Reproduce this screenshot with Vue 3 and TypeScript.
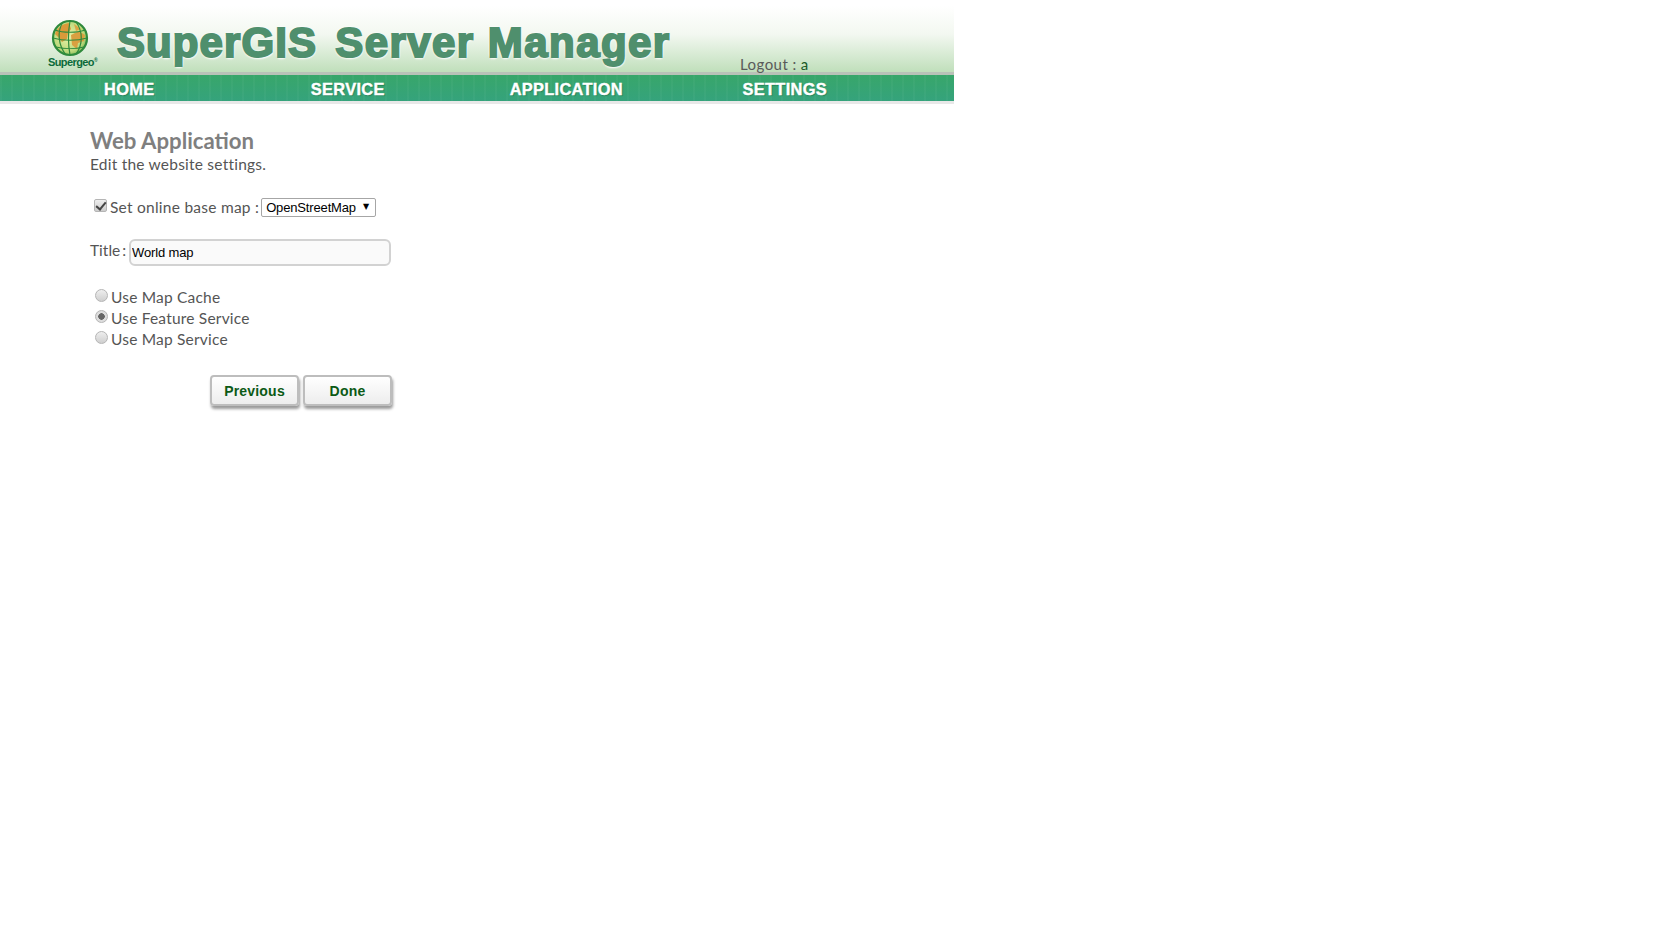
<script setup lang="ts">
import { ref } from 'vue'

const navItems: string[] = ['HOME', 'SERVICE', 'APPLICATION', 'SETTINGS']
const sources: string[] = ['Use Map Cache', 'Use Feature Service', 'Use Map Service']
const source = ref<string>('Use Feature Service')
const useBase = ref<boolean>(true)
const title = ref<string>('World map')
</script>

<template>
  <div class="page">
    <header class="header">
      <div class="banner">
        <div class="logo">
          <svg class="globe" width="38" height="38" viewBox="0 0 38 38">
            <defs>
              <radialGradient id="g" cx="0.45" cy="0.45" r="0.6">
                <stop offset="0" stop-color="#e9f2a8" />
                <stop offset="0.75" stop-color="#bcd97c" />
                <stop offset="1" stop-color="#7ab550" />
              </radialGradient>
            </defs>
            <circle cx="19" cy="19" r="17" fill="url(#g)" />
            <path d="M4 15c2-6 7-10 14-11l2 6-3 4-1 6-5 3-3-4z" fill="#d99a3a" />
            <path d="M20 16l8-4 6 4-1 6-6 2-1 6-5-4z" fill="#d9a040" />
            <path d="M23 5l7 5-5 2z" fill="#dba545" />
            <g fill="none" stroke="#2f8a3c" stroke-width="1.2">
              <circle cx="19" cy="19" r="17" stroke-width="2.2" />
              <path d="M12 3c-6 9-5 23 3 33M25 3c7 9 7 23 0 32" />
              <path d="M19 2c-2 11-2 23 0 34" />
              <path d="M4 11c8 3 22 3 30 0M2 19c10 3 24 3 34 0M5 28c8 2 20 2 28 0" />
            </g>
          </svg>
          <span class="logo-text">Supergeo<sup>®</sup></span>
        </div>
        <h1 class="product"><span class="word-a">SuperGIS</span><span class="word-b">Server Manager</span></h1>
        <div class="logout">Logout :<span class="user">a</span></div>
      </div>
      <nav class="nav">
        <a v-for="item in navItems" :key="item" class="nav-item">{{ item }}</a>
      </nav>
    </header>

    <main class="content">
      <h2 class="heading">Web Application</h2>
      <p class="sub">Edit the website settings.</p>

      <div class="base-row">
        <input v-model="useBase" class="check" type="checkbox" />
        <span class="label">Set online base map :</span>
        <select class="select">
          <option>OpenStreetMap</option>
        </select>
      </div>

      <div class="title-row">
        <span class="label">Title :</span>
        <input v-model="title" class="text" type="text" />
      </div>

      <div class="radios">
        <label v-for="s in sources" :key="s" class="radio-row">
          <input v-model="source" class="radio" type="radio" name="src" :value="s" />
          <span class="label">{{ s }}</span>
        </label>
      </div>

      <div class="actions">
        <button class="btn" type="button">Previous</button>
        <button class="btn" type="button">Done</button>
      </div>
    </main>
  </div>
</template>

<style>
html, body { background: #fff; margin: 0; }
</style>

<style scoped>
.page { min-height: 949px; background: #fff; font-family: Lato, "Open Sans", sans-serif; color: #555; }
.header { width: 954px; }
.banner {
  height: 72px;
  display: flex;
  background: linear-gradient(#fff 0, #fff 6px, #f3f8f1 34px, #c0dfbb 72px);
  border-bottom: 3px solid #b9c2b8;
}
.logo { width: 117px; padding: 19px 0 0 48px; box-sizing: border-box; display: flex; flex-direction: column; flex-shrink: 0; }
.globe { margin-left: 3px; display: block; }
.logo-text { font: bold 11px/11px "Liberation Sans", sans-serif; color: #0b6b3a; letter-spacing: -0.6px; white-space: nowrap; }
.logo-text sup { font-size: 5px; line-height: 0; vertical-align: 4px; }
.product {
  margin: 22px 0 0;
  width: 624px;
  flex-shrink: 0;
  display: flex;
  gap: 18px;
  font: bold 42px/42px "Liberation Sans", sans-serif;
  color: #4f8f6d;
  white-space: nowrap;
  -webkit-text-stroke: 2px #4f8f6d;
  text-shadow: 0 0 3px #fff, 0 0 3px #fff, 1px 1px 2px #fff, -1px -1px 2px #fff, 0 2px 2px #f2f6f0;
}
.word-a { letter-spacing: 1.1px; }
.word-b { letter-spacing: 1.45px; }
.logout { margin-top: 54px; margin-left: -1px; font-size: 15px; line-height: 20px; color: #5a5a5a; letter-spacing: 0.45px; white-space: nowrap; }
.user { color: #1c5a2a; margin-left: 4px; }
.nav {
  height: 26px;
  display: grid;
  grid-template-columns: repeat(4, 218.5px);
  padding-left: 20px;
  background:
    repeating-linear-gradient(90deg, rgba(255,255,255,.03) 0 2px, rgba(255,255,255,0) 2px 11px),
    linear-gradient(#38a66a, #35a37c);
  border-bottom: 3px solid #e8e8e8;
}
.nav-item {
  text-align: center;
  font: bold 16.4px/26px "Liberation Sans", sans-serif;
  letter-spacing: 0.3px;
  padding-top: 1px;
  height: 25px;
  color: #fff;
  -webkit-text-stroke: 0.4px #fff;
  text-shadow: 1px 1px 1px rgba(0,60,30,.35);
}
.content { padding: 23px 0 0 90px; }
.heading { margin: 0; font-size: 22.2px; line-height: 27px; font-weight: 700; color: #7f7f7f; }
.sub { margin: 0; font-size: 15.5px; line-height: 20px; color: #555; letter-spacing: 0.22px; }
.label { font-size: 15.5px; line-height: 20px; color: #555; letter-spacing: 0.25px; white-space: nowrap; }
.base-row { display: flex; align-items: center; height: 20px; margin-top: 23px; padding-left: 4px; position: relative; }
.check {
  appearance: none;
  width: 13px; height: 13px;
  margin: -3px 3px 0 0;
  border: 1px solid #b5b5b5;
  border-radius: 2px;
  box-sizing: border-box;
  background: linear-gradient(#eee, #ccc);
  position: relative;
}
.check:checked::after {
  content: "";
  position: absolute;
  left: 3px; top: 0;
  width: 4px; height: 8px;
  border: solid #444;
  border-width: 0 2px 2px 0;
  transform: rotate(40deg);
}
.select {
  appearance: none;
  width: 115px; height: 19px;
  margin-left: 2px;
  box-sizing: border-box;
  padding: 0 0 0 4px;
  border: 1px solid #a6a6a6;
  border-radius: 2px;
  font: 13px "Liberation Sans", sans-serif;
  letter-spacing: -0.15px;
  color: #000;
  background: #fff;
}
.base-row::after {
  content: "▼";
  position: absolute;
  left: 273px; top: 4px;
  font: 8px/12px "DejaVu Sans", sans-serif;
  color: #000;
  pointer-events: none;
}
.title-row { display: flex; align-items: center; margin-top: 22px; height: 27px; }
.title-row .label { margin: -5px 3px 0 0; letter-spacing: 0; word-spacing: -2px; }
.text {
  width: 262px; height: 27px;
  box-sizing: border-box;
  padding: 0 0 0 1px;
  border: 2px solid #d2d2d2;
  border-radius: 6px;
  background: #fafafa;
  font: 13px "Liberation Sans", sans-serif;
  letter-spacing: -0.15px;
  color: #000;
  outline: none;
}
.radios { margin-top: 20px; display: flex; flex-direction: column; }
.radio-row { display: flex; align-items: center; height: 21px; padding-left: 5px; }
.radio {
  appearance: none;
  width: 13px; height: 13px;
  margin: -2px 3px 0 0;
  border: 1px solid #b5b5b5;
  border-radius: 50%;
  box-sizing: border-box;
  background: linear-gradient(#eee, #cfcfcf);
}
.radio:checked { background: radial-gradient(circle, #666 0 3px, #ddd 3.5px); }
.radio-row .label { letter-spacing: 0.2px; }
.actions { margin-top: 26px; display: flex; gap: 4px; padding-left: 120px; }
.btn {
  width: 89px; height: 31px;
  box-sizing: border-box;
  border: 2px solid #bdbdbd;
  border-radius: 4px;
  background: linear-gradient(#fff, #ededed);
  box-shadow: 1px 3px 3px rgba(0,0,0,.4);
  font: bold 14px "Liberation Sans", sans-serif;
  color: #0c5a16;
  padding: 0;
  letter-spacing: 0.2px;
}
</style>
